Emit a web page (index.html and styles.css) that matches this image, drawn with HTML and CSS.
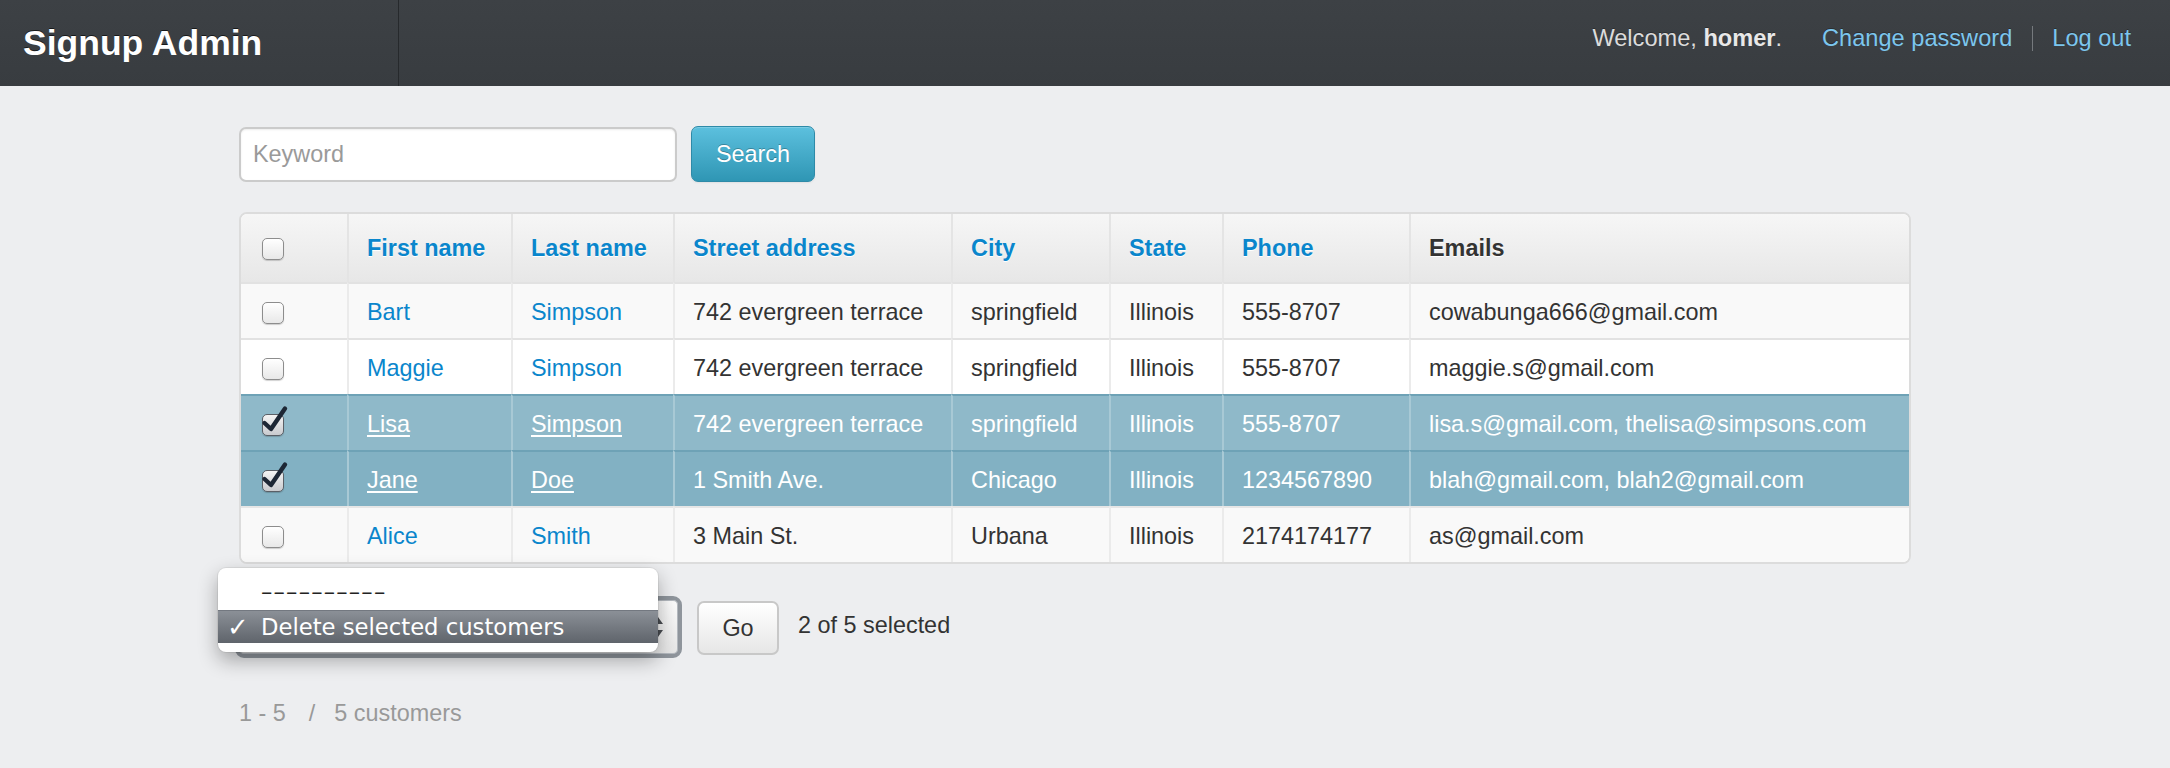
FILE: index.html
```html
<!DOCTYPE html>
<html lang="en">
<head>
<meta charset="utf-8">
<title>Signup Admin</title>
<link rel="stylesheet" href="styles.css">
</head>
<body>
<header class="topbar">
  <div class="brand">Signup Admin</div>
  <nav class="user-nav">
    <span class="welcome">Welcome, <b>homer</b>.</span>
    <a href="#">Change password</a>
    <span class="pipe"></span>
    <a href="#">Log out</a>
  </nav>
</header>

<main class="content">
  <form class="search-row">
    <input class="search-input" type="text" placeholder="Keyword">
    <button class="btn-search" type="button">Search</button>
  </form>

  <div class="grid-wrap">
    <table class="grid">
      <thead>
        <tr>
          <th class="c-check"><span class="cb"></span></th>
          <th class="c-first"><a href="#">First name</a></th>
          <th class="c-last"><a href="#">Last name</a></th>
          <th class="c-street"><a href="#">Street address</a></th>
          <th class="c-city"><a href="#">City</a></th>
          <th class="c-state"><a href="#">State</a></th>
          <th class="c-phone"><a href="#">Phone</a></th>
          <th class="c-email">Emails</th>
        </tr>
      </thead>
      <tbody>
        <tr class="odd">
          <td><span class="cb"></span></td>
          <td><a href="#">Bart</a></td>
          <td><a href="#">Simpson</a></td>
          <td>742 evergreen terrace</td>
          <td>springfield</td>
          <td>Illinois</td>
          <td>555-8707</td>
          <td>cowabunga666@gmail.com</td>
        </tr>
        <tr class="even">
          <td><span class="cb"></span></td>
          <td><a href="#">Maggie</a></td>
          <td><a href="#">Simpson</a></td>
          <td>742 evergreen terrace</td>
          <td>springfield</td>
          <td>Illinois</td>
          <td>555-8707</td>
          <td>maggie.s@gmail.com</td>
        </tr>
        <tr class="sel sel-a">
          <td><span class="cb checked"><svg class="tick-mark" viewBox="0 0 26 30" width="26" height="30"><path d="M2.5 18 L9 24 L23 3.5" /></svg></span></td>
          <td><a href="#">Lisa</a></td>
          <td><a href="#">Simpson</a></td>
          <td>742 evergreen terrace</td>
          <td>springfield</td>
          <td>Illinois</td>
          <td>555-8707</td>
          <td>lisa.s@gmail.com, thelisa@simpsons.com</td>
        </tr>
        <tr class="sel sel-b">
          <td><span class="cb checked"><svg class="tick-mark" viewBox="0 0 26 30" width="26" height="30"><path d="M2.5 18 L9 24 L23 3.5" /></svg></span></td>
          <td><a href="#">Jane</a></td>
          <td><a href="#">Doe</a></td>
          <td>1 Smith Ave.</td>
          <td>Chicago</td>
          <td>Illinois</td>
          <td>1234567890</td>
          <td>blah@gmail.com, blah2@gmail.com</td>
        </tr>
        <tr class="odd">
          <td><span class="cb"></span></td>
          <td><a href="#">Alice</a></td>
          <td><a href="#">Smith</a></td>
          <td>3 Main St.</td>
          <td>Urbana</td>
          <td>Illinois</td>
          <td>2174174177</td>
          <td>as@gmail.com</td>
        </tr>
      </tbody>
    </table>
  </div>

  <div class="actions">
    <div class="select">
      <svg class="updown" viewBox="0 0 12 24" width="12" height="24"><path d="M6 2 L11 9 H1 Z M6 22 L11 15 H1 Z" /></svg>
    </div>
    <button class="btn-go" type="button">Go</button>
    <span class="status">2 of 5 selected</span>

    <div class="popup">
      <div class="opt-blank">––––––––––</div>
      <div class="opt-sel"><span class="tick">✓</span><span>Delete selected customers</span></div>
    </div>
  </div>

  <p class="pager"><span>1 - 5</span><span class="slash">/</span><span>5 customers</span></p>
</main>
</body>
</html>
```
FILE: styles.css
```css
* { box-sizing: border-box; }

body {
  margin: 0;
  background: #edeef0;
  font-family: "Liberation Sans", Arial, Helvetica, sans-serif;
  font-size: 23.4px;
  color: #333;
}

a { color: #0a86cc; text-decoration: none; }

/* ---------- top bar ---------- */
.topbar {
  display: flex;
  height: 86px;
  background: linear-gradient(#3d4145, #383c40);
}

.brand {
  width: 399px;
  padding-left: 23px;
  border-right: 1px solid #26292c;
  font-size: 35.5px;
  font-weight: bold;
  line-height: 86px;
  color: #fff;
  text-shadow: 0 -1px 0 rgba(0, 0, 0, 0.6);
}

.user-nav {
  margin-left: auto;
  padding: 27px 39px 0 0;
  display: flex;
  align-items: flex-start;
  font-size: 23.6px;
  line-height: 23px;
  color: #dcdcdc;
  text-shadow: 0 -1px 0 rgba(0, 0, 0, 0.3);
}

.user-nav b { color: #e8e8e8; }
.user-nav a { color: #7cc6ee; }
.welcome { margin-right: 40px; }

.pipe {
  width: 1px;
  height: 25px;
  margin: -1px 19px 0 20px;
  background: #75797d;
}

/* ---------- content ---------- */
.content {
  padding: 41px 0 0 239px;
}

.search-row {
  display: flex;
  align-items: flex-start;
  margin: 0;
}

.search-input {
  width: 438px;
  height: 55px;
  padding: 0 12px;
  border: 2px solid #cbcbcb;
  border-radius: 7px;
  background: #fff;
  box-shadow: inset 0 1px 2px rgba(0, 0, 0, 0.08);
  font-family: inherit;
  font-size: 23.4px;
  color: #333;
  outline: none;
}

.search-input::placeholder { color: #9a9a9a; }

.btn-search {
  width: 124px;
  height: 56px;
  margin: -1px 0 0 14px;
  border: 1px solid #2e8aa8;
  border-radius: 7px;
  background: linear-gradient(#5cc0de, #2f96b4);
  box-shadow: inset 0 1px 0 rgba(255, 255, 255, 0.2), 0 1px 2px rgba(0, 0, 0, 0.06);
  font-family: inherit;
  font-size: 23.4px;
  color: #fff;
  text-shadow: 0 -1px 0 rgba(0, 0, 0, 0.25);
}

/* ---------- table ---------- */
.grid-wrap {
  width: 1672px;
  margin-top: 30px;
  border: 2px solid #dcdcdc;
  border-radius: 8px;
  overflow: hidden;
  background: #fff;
}

.grid {
  width: 100%;
  table-layout: fixed;
  border-collapse: separate;
  border-spacing: 0;
}

.grid th,
.grid td {
  padding: 0 10px 0 18px;
  text-align: left;
  vertical-align: middle;
  white-space: nowrap;
  border-left: 2px solid #ebebeb;
}

.grid th:first-child,
.grid td:first-child {
  border-left: 0;
  padding-left: 21px;
}

.grid th {
  height: 68px;
  background: linear-gradient(#f6f6f6, #e7e7e7);
  font-weight: bold;
  color: #333;
  text-shadow: 0 1px 0 #fff;
  border-left-color: #e4e4e4;
}

.c-check { width: 106px; }
.c-first { width: 164px; }
.c-last { width: 162px; }
.c-street { width: 278px; }
.c-city { width: 158px; }
.c-state { width: 113px; }
.c-phone { width: 187px; }
.c-email { width: 500px; }

.grid td {
  height: 56px;
  padding-top: 2px;
  border-top: 2px solid #e2e2e2;
}

.grid tr.odd td { background: #f9f9f9; }
.grid tr.even td { background: #fff; }

.grid tr.sel td {
  color: #fff;
  border-top-color: #6ea2b6;
  border-left-color: #a8c9d5;
}
.grid tr.sel td:first-child { border-left: 0; }
.grid tr.sel a { color: #fff; text-decoration: underline; text-underline-offset: 3px; }
.grid tr.sel-a td { background: #8fb9c9; }
.grid tr.sel-b td { background: #82b1c3; }
.grid tr.sel-b + tr td { border-top-color: #e6e6e6; }

/* checkbox */
.cb {
  position: relative;
  display: inline-block;
  width: 22px;
  height: 22px;
  vertical-align: middle;
  border: 1px solid #8d8d8d;
  border-radius: 5px;
  background: linear-gradient(#ffffff, #e8e8e8);
  box-shadow: 0 1px 1px rgba(0, 0, 0, 0.18);
}

.cb.checked {
  border-color: #5a5f66;
  background: linear-gradient(#f4f4f4, #c9cbcf);
}

.tick-mark {
  position: absolute;
  left: -1px;
  top: -10px;
  overflow: visible;
}

.tick-mark path {
  fill: none;
  stroke: #1d2735;
  stroke-width: 4.4;
  stroke-linecap: round;
  stroke-linejoin: round;
}

/* ---------- actions ---------- */
.actions {
  position: relative;
  display: flex;
  align-items: flex-start;
  margin-top: 32px;
}

.select {
  position: relative;
  width: 447px;
  height: 62px;
  margin-left: -4px;
  border: 4px solid #8f959c;
  border-radius: 9px;
  background: linear-gradient(#fbfbfb, #e6e6e6);
  box-shadow: inset 0 0 0 1px #b4b9bf;
}

.updown {
  position: absolute;
  right: 14px;
  top: 15px;
}

.updown path { fill: #4a4d52; }

.btn-go {
  width: 82px;
  height: 54px;
  margin: 5px 0 0 15px;
  border: 2px solid #c8c8c8;
  border-radius: 7px;
  background: linear-gradient(#ffffff, #e6e6e6);
  font-family: inherit;
  font-size: 23.4px;
  color: #333;
}

.status {
  margin-left: 19px;
  padding-top: 18px;
  line-height: 23px;
  color: #333;
}

.popup {
  position: absolute;
  left: -21px;
  top: -28px;
  width: 440px;
  height: 84px;
  overflow: hidden;
  border-radius: 8px;
  background: #fff;
  box-shadow: 0 8px 20px rgba(0, 0, 0, 0.32), 0 0 0 1px rgba(0, 0, 0, 0.06);
  font-family: "DejaVu Sans", sans-serif;
  font-size: 22.7px;
}

.opt-blank {
  height: 42px;
  padding: 8px 0 0 43px;
  line-height: 33px;
  color: #222;
  letter-spacing: 1.2px;
}

.opt-sel {
  display: flex;
  height: 33px;
  padding-left: 9px;
  line-height: 32px;
  color: #fff;
  background: linear-gradient(#8b9097, #5f646b);
  border-top: 1px solid #737880;
}

.opt-sel .tick { width: 34px; font-size: 26px; font-weight: bold; }

/* ---------- pager ---------- */
.pager {
  margin: 44px 0 0;
  line-height: 23px;
  color: #999;
}

.slash { margin: 0 19px 0 23px; }
```
